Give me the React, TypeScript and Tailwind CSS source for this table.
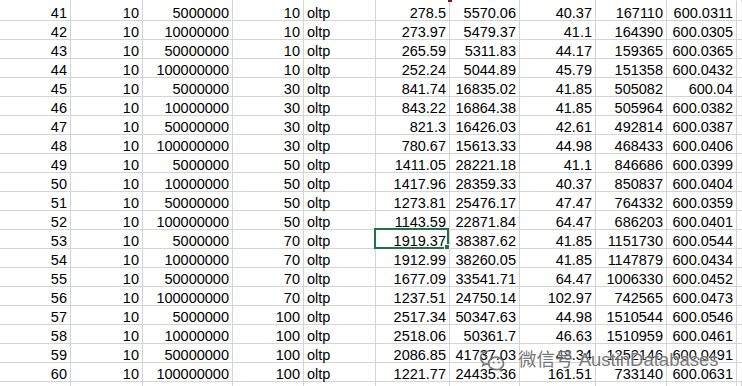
import React from "react";

type Row = [string, string, string, string, string, string, string, string, string, string];

const rows: Row[] = [
  ["41", "10", "5000000", "10", "oltp", "278.5", "5570.06", "40.37", "167110", "600.0311"],
  ["42", "10", "10000000", "10", "oltp", "273.97", "5479.37", "41.1", "164390", "600.0305"],
  ["43", "10", "50000000", "10", "oltp", "265.59", "5311.83", "44.17", "159365", "600.0365"],
  ["44", "10", "100000000", "10", "oltp", "252.24", "5044.89", "45.79", "151358", "600.0432"],
  ["45", "10", "5000000", "30", "oltp", "841.74", "16835.02", "41.85", "505082", "600.04"],
  ["46", "10", "10000000", "30", "oltp", "843.22", "16864.38", "41.85", "505964", "600.0382"],
  ["47", "10", "50000000", "30", "oltp", "821.3", "16426.03", "42.61", "492814", "600.0387"],
  ["48", "10", "100000000", "30", "oltp", "780.67", "15613.33", "44.98", "468433", "600.0406"],
  ["49", "10", "5000000", "50", "oltp", "1411.05", "28221.18", "41.1", "846686", "600.0399"],
  ["50", "10", "10000000", "50", "oltp", "1417.96", "28359.33", "40.37", "850837", "600.0404"],
  ["51", "10", "50000000", "50", "oltp", "1273.81", "25476.17", "47.47", "764332", "600.0359"],
  ["52", "10", "100000000", "50", "oltp", "1143.59", "22871.84", "64.47", "686203", "600.0401"],
  ["53", "10", "5000000", "70", "oltp", "1919.37", "38387.62", "41.85", "1151730", "600.0544"],
  ["54", "10", "10000000", "70", "oltp", "1912.99", "38260.05", "41.85", "1147879", "600.0434"],
  ["55", "10", "50000000", "70", "oltp", "1677.09", "33541.71", "64.47", "1006330", "600.0452"],
  ["56", "10", "100000000", "70", "oltp", "1237.51", "24750.14", "102.97", "742565", "600.0473"],
  ["57", "10", "5000000", "100", "oltp", "2517.34", "50347.63", "44.98", "1510544", "600.0546"],
  ["58", "10", "10000000", "100", "oltp", "2518.06", "50361.7", "46.63", "1510959", "600.0461"],
  ["59", "10", "50000000", "100", "oltp", "2086.85", "41737.03", "48.34", "1252146", "600.0491"],
  ["60", "10", "100000000", "100", "oltp", "1221.77", "24435.36", "161.51", "733140", "600.0631"],
];

const grid =
  "grid grid-cols-[71px_72px_90px_71px_72px_74px_70px_76px_71px_70px_1fr]";

function WeChatIcon() {
  return (
    <svg width="26" height="22" viewBox="0 0 26 22" fill="none">
      <path
        d="M10 2C5.3 2 1.6 5 1.6 8.7c0 2.1 1.2 4 3.1 5.2l-0.8 2.6 3-1.6c1 .3 2 .4 3.1.4"
        stroke="#6e6e6e"
        strokeWidth="1.7"
        strokeLinecap="round"
      />
      <path
        d="M17.2 8.2c-4.3 0-7.6 2.8-7.6 6.2s3.3 6.2 7.6 6.2c.9 0 1.7-.1 2.5-.4l2.6 1.3-.7-2.2c1.7-1.1 2.9-2.9 2.9-4.9 0-3.4-3.3-6.2-7.3-6.2z"
        stroke="#6e6e6e"
        strokeWidth="1.7"
      />
      <circle cx="7" cy="7.5" r="1.1" fill="#6e6e6e" />
      <circle cx="12.6" cy="7.5" r="1.1" fill="#6e6e6e" />
      <circle cx="14.6" cy="13.4" r="1" fill="#6e6e6e" />
      <circle cx="19.8" cy="13.4" r="1" fill="#6e6e6e" />
    </svg>
  );
}

export default function App() {
  return (
    <div
      className="relative w-[742px] h-[386px] overflow-hidden bg-white text-black"
      style={{ fontFamily: '"Liberation Sans", Arial, sans-serif' }}
    >
      {/* partial row above */}
      <div className={grid}>
        {Array.from({ length: 11 }).map((_, i) => (
          <div key={i} className="relative h-[2px] border-r border-[#d4d4d4]">
            {i === 5 && (
              <div className="absolute right-[-3px] top-0 w-[4px] h-[2px] bg-[#7a1c1c]" />
            )}
          </div>
        ))}
      </div>

      {rows.map((r, ri) => (
        <div key={ri} className={grid}>
          {r.map((c, ci) => (
            <div
              key={ci}
              className={`relative h-[19px] border-r border-b border-[#d4d4d4] pt-[5px] text-[14.5px] leading-[13px] whitespace-nowrap ${
                ci === 4 ? "text-left pl-[3px]" : "text-right pr-[3px]"
              }`}
            >
              {c}
              {ri === 12 && ci === 5 && (
                <>
                  <div className="absolute left-[-2px] top-[-2px] right-[0px] bottom-[-1px] border-2 border-[#217346]" />
                  <div className="absolute right-[-1px] bottom-[-2px] w-[6px] h-[6px] bg-[#217346] border border-white" />
                </>
              )}
            </div>
          ))}
          <div className="h-[19px] border-b border-[#d4d4d4]" />
        </div>
      ))}

      {/* partial row below */}
      <div className={grid}>
        {Array.from({ length: 11 }).map((_, i) => (
          <div key={i} className="h-[5px] border-r border-[#d4d4d4]" />
        ))}
      </div>

      {/* watermark */}
      <div
        className="absolute left-[479px] top-[349px] flex items-center gap-[13px] opacity-90"
        style={{ textShadow: "0 0 2px #fff, 0 0 1px #fff" }}
      >
        <WeChatIcon />
        <span
          className="text-[18.5px] leading-[22px] text-[#6a6a6a] whitespace-nowrap"
          style={{ fontFamily: '"Liberation Sans", "Noto Sans CJK SC", sans-serif' }}
        >
          微信号 AustinDatabases
        </span>
      </div>
    </div>
  );
}
